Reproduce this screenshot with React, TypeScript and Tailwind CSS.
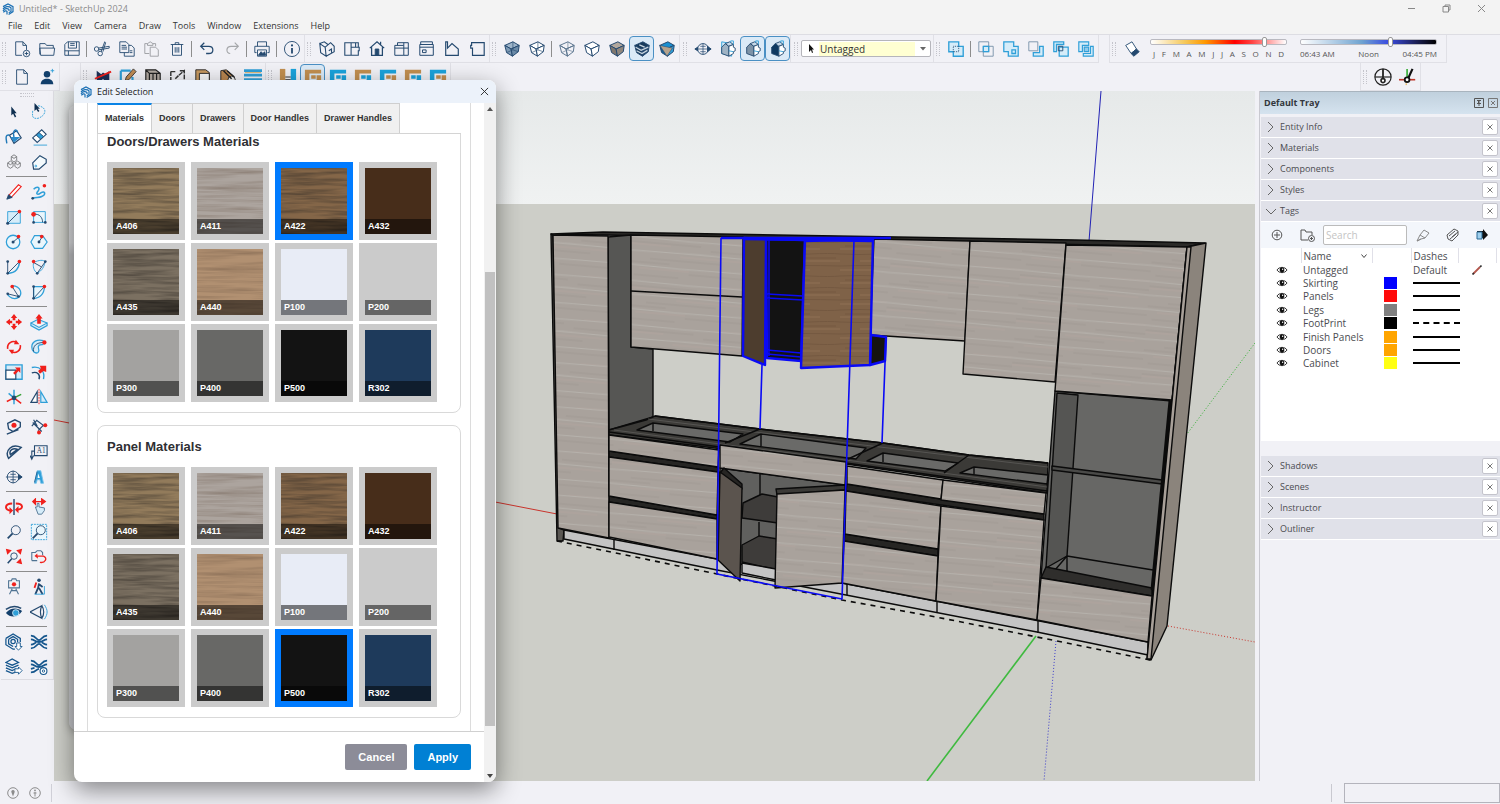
import { useState } from "react"
import type { ReactNode } from "react"
import clsx from "clsx"

const NAVY = "#24496f"
const SKY = "#2f9fd8"
const PALE = "#d5ecf9"
const RED = "#f0201c"

type Item = { label: string; icon: ReactNode; active?: boolean } | "sep"

/* ---------- icon pieces ---------- */

const Logo = () => (
    <svg viewBox="0 0 12 12" className="size-3 shrink-0" fill="none" stroke="#1b70b4" strokeWidth="1.2">
        <path d="M1 3.6 L6 1 L11 3.6 V8.6 L6.6 11.4" />
        <path d="M1 5.8 C3 3.2 7 2.8 9 4.8 V8.4 L6.8 9.8" />
        <path d="M1 7.8 C2.6 5.4 5.6 5 7 6.6 V8" />
        <path d="M1.4 9.4 C2.6 7.8 4.2 7.4 5 8.4 V11.4" />
    </svg>
)

const Cube = ({ top = "none", left = "none", right = "none", line = NAVY, inner = false }) => (
    <g stroke={line} strokeWidth="1.1" strokeLinejoin="round">
        <path d="M2 6 L11 2 L18 6 L9 10 Z" fill={top} />
        <path d="M2 6 L9 10 L10.5 18 L4 14 Z" fill={left} />
        <path d="M18 6 L9 10 L10.5 18 L17 13 Z" fill={right} />
        {inner && <path d="M11 2 L11 11 L4 14 M11 11 L17 13" strokeWidth="0.7" />}
    </g>
)

const House = ({ fill = "#9fb3c4", front = "#fff" }) => (
    <g stroke={NAVY} strokeWidth="1">
        <path d="M3 8 L7 4 L11 7 V18 L3 15 Z" fill={fill} />
        <path d="M7 4 L12 2 L16 5 L11 7 Z" fill="#c7d9e8" />
        <path d="M11 7 L16 5 V8 L18 9 V12 L16 13 V15 L11 18 Z" fill={front} />
        <path d="M11 12 L16 13 M13 3 V1 H16 V5" stroke={SKY} />
    </g>
)

const Dot = ({ x, y, r = 2, c = NAVY }) => <circle cx={x} cy={y} r={r} fill={c} stroke="none" />

const Glass = () => (
    <g>
        <circle cx="12" cy="8" r="5" />
        <path d="M8.5 11.5 L3 17" strokeWidth="2" />
    </g>
)

const Layout = ({ a, b }) => (
    <g stroke="none">
        <path d="M1 2 H19 V6 H6 V18 H1 Z" fill={a} />
        <path d="M8 8 H13 V12 H8 Z M14 8 H19 V18 H14 Z" fill={b} />
    </g>
)

/* ---------- toolbars ---------- */

const fileTools: Item[] = [
    { label: "New", icon: <><path d="M10 17 H3 V2 H11 L15 6 V11 M11 2 V6 H15" /><circle cx="15" cy="15" r="3.6" /><path d="M15 13 V17 M13 15 H17" /></> },
    { label: "Open", icon: <path d="M2 16 V4 H8 L9.5 6 H17 V9 M2 9 H18.5 L17.5 17 H3 Z" /> },
    { label: "Save", icon: <path d="M5 2 H18 V17 H2 V5 Z M6 2 V9 H15 V2 M2 12 H18 M6 12 V17 M8 4 H13 M8 6 H13" /> },
    "sep",
    { label: "Cut", icon: <><circle cx="4" cy="10" r="2.5" /><circle cx="8" cy="15" r="2.5" /><path d="M6 9 L18 7 L18 9 L6 11 M9 13 L13 2 L14 3 L11 13" /></> },
    { label: "Copy", icon: <path d="M2 2 H9 L12 5 V14 H2 Z M12 6 H15 L18 9 V18 H7 V14 M4 6 H9 M4 8 H10 M4 10 H10 M13 12 H16 M13 14 H16" /> },
    { label: "Paste", icon: <g stroke="#9a9ca0"><path d="M7 15 H2 V4 H5 M11 4 H14 V7 M5 6 V4 L8 2 L11 4 V6 Z M8 8 H14 L17 11 V18 H8 Z" /></g> },
    { label: "Delete", icon: <path d="M3 5 H17 M8 5 V3 H12 V5 M5 5 V17 H15 V5 M8 8 V14 M10 8 V14 M12 8 V14" /> },
    "sep",
    { label: "Undo", icon: <path d="M7 3 L3 7 L7 11 M3 7 H12 C18 7 18 15 12 15 H9" strokeWidth="1.4" /> },
    { label: "Redo", icon: <path d="M13 3 L17 7 L13 11 M17 7 H9 C3 7 3 15 8 15" stroke="#a5a7aa" strokeWidth="1.3" /> },
    "sep",
    { label: "Print", icon: <><path d="M5 7 V2 H15 V7 M16 14 H18 V7 H2 V14 H4 M5 11 H15 V18 H5 Z" /><path d="M6 17 L9 13 L11 15 L13 13 L14 17 Z" fill={NAVY} /></> },
    "sep",
    { label: "Model Info", icon: <><circle cx="10" cy="10" r="8.4" /><path d="M10 9 V15" strokeWidth="2" /><Dot x={10} y={6} r={1.2} /></> },
]

const viewTools: Item[] = [
    { label: "Iso", icon: <path d="M2 4 L8 8 L9 18 L3 14 Z M8 8 L14 3 L18 7 V13 L9 18 M2 4 L7 2 L11 5 M12 12 L15 10 V14" strokeWidth="1.2" /> },
    { label: "Top", icon: <path d="M2 3 H17 V8 H18 V12 H17 V17 H2 Z M9 3 V17 M9 8 H17 M14 3 V8" strokeWidth="1.2" /> },
    { label: "Front", icon: <><path d="M2 9 L10 2 L18 9 M4 8 V17 H16 V8 M14 5 V2" strokeWidth="1.4" /><path d="M8 10 H12 V17 H8 Z" fill={NAVY} /></> },
    { label: "Right", icon: <path d="M2 6 H12 V17 H2 Z M5 6 V3 H17 V17 H12 M12 3 V6 M2 9 H17" strokeWidth="1.1" /> },
    { label: "Back", icon: <path d="M2 5 H17 V17 H2 Z M3 5 V2 H16 V5 M2 8 H17 M5 11 H9 V14 H5 Z" strokeWidth="1.1" /> },
    { label: "Left", icon: <path d="M3 2 V17 H17 V10 L10 4 L5 9 V2 Z" strokeWidth="1.3" /> },
    { label: "Bottom", icon: <path d="M4 3 H18 V17 H5 V9 H3 V6 H4 Z" strokeWidth="1.3" /> },
]

const styleTools: Item[] = [
    { label: "X-Ray", icon: <Cube top="#9db4c9" left="#7e9ab4" right="#6b8aa7" inner /> },
    { label: "Back Edges", icon: <Cube top="#fff" left="#fff" right="#fff" inner /> },
    "sep",
    { label: "Wireframe", icon: <Cube inner line="#5d7690" /> },
    { label: "Hidden Line", icon: <Cube top="#fff" left="#fff" right="#fff" /> },
    { label: "Shaded", icon: <Cube top="#b1a79d" left="#7f766d" right="#8f867c" /> },
    { label: "Shaded With Textures", active: true, icon: <><Cube top="#173a5c" left="#173a5c" right="#24496f" /><path d="M3 8 L9 11.5 L17 8 M4 12 L10 15 L16 11.5 M7 5.5 L13 8" stroke="#c9d6e0" strokeWidth="1.4" /></> },
    { label: "Monochrome", icon: <><Cube top="#1a8fd0" left="#1a5f93" right="#2f9fd8" /><path d="M2 6 L16 9 L10 18 Z" fill="#b5a28c" stroke={NAVY} strokeWidth="0.6" /></> },
]

const sectionTools: Item[] = [
    { label: "Section Plane", icon: <><circle cx="10" cy="10" r="6" /><path d="M1 10 H19 M10 4 V16 M7 7 H13 M7 13 H13" strokeWidth="0.8" /><path d="M1 10 L4 8 V12 Z M19 10 L15 7 V13 Z" fill={NAVY} /></> },
    { label: "Display Section Planes", icon: <><path d="M3 2 L14 4 V18 L3 15 Z" fill={PALE} stroke={SKY} /><House /></> },
    { label: "Display Section Cuts", active: true, icon: <House fill="#7d93a7" /> },
    { label: "Display Section Fill", active: true, icon: <House fill="#0f3a61" /> },
]

const solidTools: Item[] = [
    { label: "Outer Shell", icon: <g stroke={SKY}><path d="M2 2 H13 V7 H18 V18 H7 V13 H2 Z" fill={PALE} strokeWidth="1.5" /><path d="M7 7 H13 V13 H7 Z" stroke={NAVY} strokeDasharray="1 1" /></g> },
    "sep",
    { label: "Intersect", icon: <><path d="M2 2 H13 V13 H2 Z M7 7 H18 V18 H7 Z" stroke="#7791a8" /><path d="M7 7 H13 V13 H7 Z" fill={PALE} stroke={SKY} strokeWidth="1.4" /></> },
    { label: "Union", icon: <g stroke={SKY} strokeWidth="1.4"><path d="M2 2 H13 V7 H18 V18 H7 V13 H2 Z" fill={PALE} /><path d="M11 11 H15 V15 H11 Z" /></g> },
    { label: "Subtract", icon: <><path d="M2 2 H12 V12 H2 Z" stroke="#7791a8" /><path d="M14 7 H18 V18 H7 V14 H14 Z" fill={PALE} stroke={SKY} strokeWidth="1.4" /></> },
    { label: "Trim", icon: <><path d="M2 2 H13 V5 H5 V13 H2 Z M8 8 H18 V18 H8 Z" fill={PALE} stroke={SKY} strokeWidth="1.4" /><path d="M7 7 H12 V12 H7 Z" /></> },
    { label: "Split", icon: <g stroke={SKY} strokeWidth="1.3"><path d="M2 2 H13 V6 H6 V13 H2 Z M18 18 H7 V15 H15 V7 H18 Z" fill={PALE} /><path d="M8 8 H13 V13 H8 Z" fill="#8fcbec" /></g> },
]

const cabinetTools: Item[] = [
    { label: "Kitchen", icon: <><path d="M3 16 V3 L8 7 L10 5 L13 7 L17 3 V16 H13 L10 12 L7 16 Z" fill="#1c3057" stroke="none" /><path d="M1 12 L19 4" stroke={RED} strokeWidth="2" /></> },
    { label: "Edit Cabinet", icon: <><path d="M2 3 H13 M2 3 V18 H15 V10" stroke={SKY} strokeWidth="2.4" /><path d="M7 14 L8 10 L16 1 L19 4 L11 13 Z" fill="#c08b52" stroke="#333" /></> },
    { label: "Box", icon: <path d="M2 2 L13 2 L18 6 V18 H6 L2 14 Z M6 6 H18 M6 6 V18 M2 2 L6 6 M10 6 V18 M14 6 V18" fill="#b3aaa2" stroke="#222" strokeWidth="1.3" /> },
    { label: "Swing", icon: <path d="M2 4 V15 M2 4 H7 M11 8 L17 3 V16 M12 3 H17 M7 12 L11 8" stroke="#333" strokeWidth="1.6" strokeDasharray="5 1" /> },
    { label: "Panel", icon: <><path d="M2 2 H13 L17 5 V18 H5 L2 15 Z" fill="#c8995f" stroke="#222" /><path d="M6 6 H17 V18 H6 Z" fill="#f6f6f6" stroke="#222" /></> },
    { label: "Fittings", icon: <><path d="M2 3 L8 2 L16 9 V17 H2 Z" fill="#b98650" stroke="#222" /><circle cx="14" cy="13" r="4" fill="#eee" stroke="#222" /><path d="M5 3 L14 12 M9 3 L17 10" stroke="#222" strokeWidth="1.6" /></> },
    { label: "Report", icon: <><path d="M0 3 H20 M0 8 H20 M0 13 H20" stroke={SKY} strokeWidth="3" /><path d="M1 5 H19" stroke="#d9a44c" strokeWidth="0.8" /></> },
]

const BR = "#c28f4f"
const BL = "#1aa3dc"
const layoutTools: Item[] = [
    { label: "Spacing", icon: <><path d="M1 1 H7 V18 H1 Z" fill={BR} stroke="none" /><path d="M13 1 H19 V18 H13 Z" fill={BL} stroke="none" /><path d="M7 10 H13 M7 13 H13" stroke="#222" /></> },
    { label: "Corner", active: true, icon: <Layout a={BR} b={BR} /> },
    { label: "Layout 2", icon: <Layout a={BL} b={BL} /> },
    { label: "Layout 3", icon: <Layout a={BR} b={BL} /> },
    { label: "Layout 4", icon: <Layout a={BL} b={BR} /> },
    { label: "Layout 5", icon: <Layout a={BR} b={BL} /> },
    { label: "Layout 6", icon: <Layout a={BL} b={BR} /> },
]

const accountTools: Item[] = [
    { label: "New Page", icon: <path d="M4 2 H12 L16 6 V18 H4 Z M12 2 V6 H16" /> },
    { label: "Add Person", icon: <><circle cx="10" cy="7" r="3.6" fill="#123f6b" stroke="none" /><path d="M3 18 C3 10 17 10 17 18 Z" fill="#123f6b" stroke="none" /><path d="M16 1 V5 M14 3 H18" stroke={SKY} /></> },
]

const drawTools: Item[][] = [
    [
        { label: "Select", icon: <path d="M7 4 L7 14 L9 12 L11 16 L12.5 15 L10.5 11.5 H13 Z" fill="#0f2f50" stroke="none" /> },
        { label: "Lasso", icon: <><path d="M9 3 C20 5 18 14 9 17 C1 18 3 13 3 8" stroke={SKY} strokeDasharray="2 1" /><path d="M5 0 L5 9 L7 7 L9 10 L10.5 9 L8.5 6.5 H11 Z" fill="#0f2f50" stroke="none" /></> },
        { label: "Paint Bucket", icon: <><path d="M5 8 L13 3 L18 11 L10 17 Z" fill="#fff" strokeWidth="1.3" /><path d="M6 10 L17 10 L10 16 Z" fill="#2d8ccb" stroke="none" /><path d="M10 10 C8 2 13 0 14 5 M5 8 C0 7 1 12 2 17" stroke="#2179b8" strokeWidth="1.6" /></> },
        { label: "Eraser", icon: <><path d="M3 11 L13 2 L18 7 L8 16 Z" fill="#fff" strokeWidth="1.2" /><path d="M7 8 L10 5 L15 9.5 L12 12.5 Z" fill={SKY} /><path d="M4 19 H19" stroke={SKY} /></> },
        { label: "Components", icon: <path d="M10 2 L13 4 V8 L10 10 L7 8 V4 Z M6 9 L9 11 V15 L6 17 L3 15 V11 Z M14 9 L17 11 V15 L14 17 L11 15 V11 Z M7 4 L10 6 L13 4 M3 11 L6 13 L9 11 M11 11 L14 13 L17 11" stroke="#77787b" /> },
        { label: "Tag", icon: <><path d="M3 11 L11 3 L18 7 V11 L10 18 H4 Z" strokeWidth="1.3" fill="#f4fafd" /><circle cx="6.5" cy="14.5" r="1" stroke={SKY} /></> },
    ],
    [
        { label: "Line", icon: <><path d="M4 14 L15 2 L18 4 L7 16 Z" fill="#fff" stroke={RED} strokeWidth="1.2" /><path d="M2 18 L4 13 L8 16 Z" fill={NAVY} /></> },
        { label: "Freehand", icon: <><path d="M4 7 C8 3 12 5 9 9 C6 12 8 14 12 11 C17 8 18 13 13 15 C10 17 6 15 3 17" stroke={SKY} strokeWidth="1.7" /><Dot x={16} y={3} c={RED} /><Dot x={3} y={17} r={1.5} /></> },
        { label: "Rectangle", icon: <><path d="M3 4 H17 V17 H3 Z" fill={PALE} stroke={SKY} /><path d="M3 17 L16 4" /><Dot x={3} y={17} r={1.7} /><Dot x={16} y={4} c={RED} /></> },
        { label: "Rotated Rectangle", icon: <><path d="M4 4 H17 V16 H4 Z" stroke={SKY} fill="#eaf6fc" /><path d="M4 7 C11 6 14 11 14 16" /><Dot x={4} y={7} r={2.6} c={RED} /><Dot x={4} y={16} r={1.5} /><Dot x={17} y={16} r={1.5} /></> },
        { label: "Circle", icon: <><circle cx="9" cy="10" r="7.5" stroke={SKY} fill="#eaf6fc" strokeWidth="1.4" /><path d="M9 10 L15 5" /><Dot x={9} y={10} r={1.7} /><Dot x={15} y={4} c={RED} /></> },
        { label: "Polygon", icon: <><path d="M5 3 H14 L19 10 L14 17 H5 L1 10 Z" stroke={SKY} fill="#eaf6fc" strokeWidth="1.3" /><path d="M10 10 L13 5" /><Dot x={10} y={10} r={1.6} /><Dot x={13} y={4} c={RED} /></> },
        { label: "Arc", icon: <><path d="M3 17 C12 17 16 11 16 4" stroke={SKY} strokeWidth="1.6" /><path d="M3 4 V17 L16 4" /><Dot x={3} y={4} r={1.5} /><Dot x={3} y={17} r={1.5} /><Dot x={16} y={4} c={RED} /></> },
        { label: "2 Point Arc", icon: <><path d="M4 5 C10 2 15 2 17 4 C15 13 11 15 8 17 C4 14 3 9 4 5" stroke={SKY} /><path d="M4 5 L13 10 M17 4 L8 17" /><Dot x={4} y={4} c={RED} /><Dot x={17} y={4} r={1.5} /><Dot x={8} y={17} r={1.5} /></> },
        { label: "3 Point Arc", icon: <><path d="M8 3 C19 4 19 13 15 16 C10 19 5 16 3 13" stroke={SKY} strokeWidth="1.4" /><path d="M8 4 L15 15 L3 12" /><Dot x={8} y={4} c={RED} /><Dot x={15} y={15} r={1.5} /><Dot x={3} y={12} r={1.5} /></> },
        { label: "Pie", icon: <><path d="M4 4 H16 C16 12 11 17 4 17 Z" stroke={SKY} fill="#eaf6fc" strokeWidth="1.4" /><path d="M4 4 V17 L16 4" /><Dot x={4} y={4} r={1.5} /><Dot x={4} y={17} r={1.5} /><Dot x={16} y={4} c={RED} /></> },
    ],
    [
        { label: "Move", icon: <path d="M10 1 L13.5 5.5 H11.5 V8 H8.5 V5.5 H6.5 Z M10 19 L6.5 14.5 H8.5 V12 H11.5 V14.5 H13.5 Z M1 10 L5.5 6.5 V8.5 H8 V11.5 H5.5 V13.5 Z M19 10 L14.5 13.5 V11.5 H12 V8.5 H14.5 V6.5 Z" fill={RED} stroke="none" /> },
        { label: "Push Pull", icon: <><path d="M1 11 L9 7 L19 11 L10 16 Z M1 11 V14 L10 19 L19 14 V11" fill={PALE} stroke={SKY} strokeWidth="1.3" /><path d="M10 1 L14 6 H12 V12 H8 V6 H6 Z" fill={RED} stroke="none" /></> },
        { label: "Rotate", icon: <g stroke={RED} strokeWidth="1.8"><path d="M3 12 C2 6 8 2 13 5 M17 8 C18 14 12 18 7 15" /><path d="M12 2 L16 7 L10 7 Z M8 18 L4 13 L10 13 Z" fill={RED} stroke="none" /></g> },
        { label: "Follow Me", icon: <><path d="M15 3 C8 1 2 4 2 10 C2 15 6 18 9 16 C12 13 7 11 10 8 L15 7" fill={PALE} stroke={SKY} strokeWidth="1.4" /><path d="M4 15 C3 9 7 5 15 5" /><Dot x={16} y={5} r={2.4} c={RED} /></> },
        { label: "Scale", icon: <><path d="M1 2 H19 V18 H1 Z" fill={PALE} stroke={SKY} strokeWidth="1.5" /><path d="M1 8 H12 V18 H1 Z" fill="#fff" strokeWidth="1.3" /><path d="M9 11 L13 7 L11 5 H17 V11 L15 9 L11 13 Z" fill={RED} stroke="none" /></> },
        { label: "Offset", icon: <><path d="M2 5 C11 3 17 9 15 18" stroke={SKY} strokeWidth="1.5" /><path d="M2 11 C8 9 12 13 10 18" strokeWidth="1.5" /><path d="M9 9 L12 6 L11 3 H18 V10 L15 9 L11 12 Z" fill={RED} stroke="none" /></> },
        { label: "Axes", icon: <><path d="M10 11 V2 M10 11 L4 6 M10 11 L10 18" stroke={SKY} strokeWidth="1.6" /><path d="M10 11 L18 7" stroke="#35a035" strokeWidth="1.6" /><path d="M10 11 L18 17 M10 11 L2 15" stroke={RED} strokeWidth="1.6" /><Dot x={10} y={11} r={2.6} /></> },
        { label: "Flip", icon: <><path d="M8 4 V16 H1 Z" fill="#fff" strokeWidth="1.3" /><path d="M12 4 V16 H19 Z" fill={PALE} stroke={SKY} strokeWidth="1.3" /><path d="M10 1 V19" stroke={RED} strokeDasharray="2 1" /></> },
    ],
    [
        { label: "Tape Measure", icon: <><path d="M3 6 L11 2 L17 5 L17 10 L9 15 L4 12 Z M2 18 L15 13" strokeWidth="1.5" /><Dot x={10} y={8} r={2.8} c={RED} /></> },
        { label: "Dimensions", icon: <><path d="M3 5 L13 15 M8 3 L16 9 M2 9 L8 2 M4 2 L8 9 M9 14 L15 8" strokeWidth="1.3" /><Dot x={17} y={8} r={2.2} c={RED} /><Dot x={10} y={16} r={2.2} c={RED} /></> },
        { label: "Protractor", icon: <path d="M4 17 C-1 8 8 0 18 5 Z M6 13 C4 8 9 5 14 7 Z" strokeWidth="1.6" /> },
        { label: "Text", icon: <><path d="M5 3 H19 V14 H5 Z M5 9 H2 V17 M0 14 L2 18 L4 14" strokeWidth="1.2" /><text x="7.5" y="11.5" fontSize="8" fill={NAVY} stroke="none" fontFamily="Liberation Serif, serif">A1</text></> },
        { label: "Section", icon: <><circle cx="9" cy="10" r="6.5" /><path d="M1 10 H19 M9 3 V17 M6 7 H12 M6 13 H12" strokeWidth="0.9" /><path d="M15 7 L19 10 L15 13 Z" fill={NAVY} /></> },
        { label: "3D Text", icon: <><path d="M5 17 L8 3 H12 L15 17 H12 L11 13 H8 L7 17 Z" fill={SKY} stroke="#79c3ea" /><path d="M9 6 L11 11 H8.5 Z" fill="#fff" stroke="none" /><path d="M8 4 L5 16" stroke="#1b5f93" /></> },
    ],
    [
        { label: "Orbit", icon: <><path d="M10 1 V19" strokeWidth="1.6" /><path d="M8 6 C-1 6 -1 14 7 14 M12 6 C21 6 21 13 13 13" stroke={RED} strokeWidth="2.2" /><path d="M5 10 L9 14 L5 18 Z M15 9 L11 13 L15 17 Z" fill={RED} stroke="none" /></> },
        { label: "Pan", icon: <><path d="M3 4 H16 M3 4 L6 1 V7 Z M17 4 L13 1 V7 Z" stroke={RED} fill={RED} strokeWidth="1.4" /><path d="M6 10 L8 10 V6 H10 V10 L16 11 V14 L13 18 H9 Z" fill={PALE} stroke="#4f7392" /></> },
        { label: "Zoom", icon: <Glass /> },
        { label: "Zoom Window", icon: <><path d="M1.5 1.5 H18.5 V18.5 H1.5 Z" stroke={SKY} strokeDasharray="2 1" fill="#eaf6fc" /><Glass /></> },
        { label: "Zoom Extents", icon: <><circle cx="10" cy="9" r="3.6" /><path d="M7.5 12 L3 17" strokeWidth="1.7" /><path d="M2 2 L6 3 L3 6 Z M18 2 L14 3 L17 6 Z M18 17 L14 16 L17 13 Z" fill={RED} stroke={RED} strokeWidth="1.6" /></> },
        { label: "Previous", icon: <><path d="M2 14 V5 H6 L8 3 H12 L14 5 V8 M2 14 H8" stroke="#4f7392" strokeWidth="1.2" /><path d="M8 9 H15 C20 11 17 17 11 16" stroke={RED} strokeWidth="1.5" /><path d="M8 6 L5 9 L9 12 Z" fill={RED} stroke="none" /></> },
    ],
    [
        { label: "Position Camera", icon: <><path d="M4 3 H7 L8 1 H12 L13 3 H16 V11 H4 Z M8 12 L5 18 M12 12 L15 18 M7 14 H13" stroke="#4f7392" strokeWidth="1.2" /><Dot x={10} y={7} r={2.4} c={RED} /></> },
        { label: "Walk", icon: <><Dot x={10} y={2.5} r={2} /><path d="M10 6 L9 11 L6 18 M10 11 L14 18 M10 7 L14 10" strokeWidth="2" /><path d="M7 5 L5 11" stroke={RED} strokeWidth="2" /><path d="M16 9 V18 H5" stroke={SKY} /></> },
        { label: "Look Around", icon: <><path d="M1 11 C6 5 14 5 19 9 C15 16 6 17 1 11 Z" fill="#123f6b" stroke="none" /><circle cx="12" cy="11" r="3.6" fill={SKY} stroke="#cfe9f7" /><path d="M1 7 C7 3 13 3 18 6" strokeWidth="1.6" /></> },
        { label: "Field of View", icon: <><path d="M0 10 L13 3 C11 8 11 12 13 17 Z M13 3 C16 7 16 13 13 17" strokeWidth="1.3" /><path d="M16 2 C20 8 20 12 16 18" stroke={SKY} /></> },
    ],
    [
        { label: "3D Warehouse", icon: <g stroke="#15568d" strokeWidth="1.4"><path d="M1 6 L9 1 L17 6 V10 M1 6 V13 L9 18 H11 M4 7 L9 4 L14 7 V10 M4 7 V12 L9 15" /><circle cx="9" cy="9.5" r="2.4" /><path d="M13 11 H17 V15 H19 L15 19 L11 15 H13 Z" fill="#fff" strokeWidth="1" /></g> },
        { label: "Extension Warehouse", icon: <g stroke="#15568d" strokeWidth="2"><path d="M1 3 C7 3 7 8 10 8 C13 8 13 3 19 3 M1 17 C7 17 7 12 10 12 C13 12 13 17 19 17 M1 7 C5 7 5 10 10 10 C15 10 15 7 19 7 M1 13 C4 13 5 11 7 10.5 M19 13 C16 13 15 11 13 10.5" /></g> },
        { label: "Layers", icon: <g stroke="#15568d" strokeWidth="1.4"><path d="M1 5 L8 1 L15 5 L8 8 Z M1 8 L8 11 L15 8 M1 11 L8 14 L12 12 M1 14 L8 17 L11 16" /><path d="M11 12 H15 V10 L19 14 L15 18 V16 H11 Z" fill="#fff" strokeWidth="1" /></g> },
        { label: "Extension Manager", icon: <g stroke="#15568d" strokeWidth="2"><path d="M1 3 C7 3 7 8 10 8 C13 8 13 3 19 3 M1 16 C7 16 7 12 10 12 M1 7 C5 7 5 10 10 10 C15 10 15 7 19 7 M1 12 L5 11" /><circle cx="15" cy="14.5" r="3.8" fill="#fff" strokeWidth="1.2" /><circle cx="15" cy="14.5" r="1.3" strokeWidth="1" /></g> },
    ],
]

const Tool = ({ item }: { item: Item }) => {
    if (item === "sep") {
        return <span className="mx-[2px] h-4 w-px shrink-0 bg-[#8d8d8d]" />
    }
    return (
        <button
            type="button"
            aria-label={item.label}
            className={clsx(
                "flex h-[25px] w-[25px] shrink-0 items-center justify-center rounded",
                item.active && "border border-[#4a90c4] bg-[#dbeaf7]"
            )}
        >
            <svg viewBox="0 0 20 20" className="size-[18px] shrink-0" fill="none" stroke={NAVY} strokeWidth="1">
                {item.icon}
            </svg>
        </button>
    )
}

const Bar = ({ items, children, className }: { items?: Item[]; children?: ReactNode; className?: string }) => (
    <div className={clsx("flex shrink-0 items-center border-r border-b border-[#e0e0e6]", className)}>
        <span className="mr-[3px] ml-[2px] h-[14px] w-1 shrink-0 border-x border-dotted border-[#c4c4cb]" />
        {items?.map((it, i) => <Tool key={i} item={it} />)}
        {children}
    </div>
)

/* ---------- kitchen model ---------- */

const woodFaces = [
    "553,235 608,236 609,538 558,528",
    "631,235 743,237 742,356 631,347",
    "874,239 970,241 965,341 870,335",
    "970,241 1066,243 1055,382 963,374",
    "1066,245 1187,247 1172,400 1055,391",
    "609,435 719,450 718,467 609,451",
    "609,457 718,472 717,515 609,496",
    "609,502 717,519 717,559 609,537",
    "720,445 846,462 845,485 720,468",
    "847,466 943,480 941,499 847,484",
    "846,491 941,506 938,549 845,534",
    "844,541 938,556 936,601 842,583",
    "943,480 1046,493 1044,514 941,500",
    "941,506 1044,520 1037,620 936,601",
    "1041,578 1152,596 1148,642 1037,620",
]

const Model = () => (
    <svg
        viewBox="54 91 1201 690"
        preserveAspectRatio="xMaxYMin slice"
        className="block h-full w-full"
        fill="none"
        role="img"
        aria-label="Kitchen model"
    >
        <defs>
            <linearGradient id="sky" x1="0" y1="0" x2="0" y2="1">
                <stop offset="0" stopColor="#e6e9e9" />
                <stop offset="1" stopColor="#f0f2f2" />
            </linearGradient>
            <pattern id="ash" width="130" height="44" patternUnits="userSpaceOnUse" patternTransform="rotate(5)">
                <path d="M0 0 H130 V44 H0 Z" fill="#a9a29c" />
                <path d="M0 9 H70 M80 13 H130 M20 25 H90 M0 29 H40 M60 38 H130 M5 42 H50" stroke="#a29a94" />
                <path d="M0 11 H40 M50 21 H120 M10 35 H60 M90 4 H130" stroke="#ada39d" strokeWidth="2" />
                <path d="M0 4 L60 5 L130 4 M0 18 L70 17 L130 18 M0 32 L50 33 L130 32" stroke="#b6b2ac" strokeWidth="1.2" />
            </pattern>
            <pattern id="oak" width="70" height="34" patternUnits="userSpaceOnUse">
                <path d="M0 0 H70 V34 H0 Z" fill="#7f6248" />
                <path d="M0 4 Q20 3 40 4 T70 4 M5 8 H40 M0 16 Q20 17 40 16 T70 16 M30 20 H66 M0 28 Q30 27 70 28" stroke="#745840" />
                <path d="M0 11 H50 M20 23 H70 M0 32 H40" stroke="#87694e" strokeWidth="1.8" />
            </pattern>
        </defs>
        <rect x="54" y="91" width="1201" height="114" fill="url(#sky)" />
        <rect x="54" y="204" width="1201" height="577" fill="#cdcec8" />

        {/* axes */}
        <path d="M1101 91 L1089 241" stroke="#2222b4" />
        <path d="M54 420 L110 431 M490 501 L557 514" stroke="#c8342c" />
        <path d="M1168 626 L1255 642" stroke="#c8342c" strokeDasharray="1 2" />
        <path d="M1255 343 L1187 434" stroke="#2fae2f" strokeDasharray="1 2" />
        <path d="M1036 636 L927 781" stroke="#3fba3f" strokeWidth="1.6" />
        <path d="M1056 641 L1044 781" stroke="#3c3ccb" strokeDasharray="1 2" />

        <g stroke="#0b0b0b" strokeWidth="1.4" strokeLinejoin="round">
            {/* carcass sides and tops */}
            <path d="M551 234 L603 232 L1075 240 L1205 243 L1187 247 L873 240 Z" fill="#2b2a28" />
            <path d="M551 234 L553 235 L559 528 L564 530 L563 541 L557 541 Z" fill="#5a5753" />
            <path d="M608 237 L631 235 V347 L653 349 V417 L609 430 Z" fill="#565654" />
            <path d="M564 530 L717 559 L842 583 L1148 642 V655 L1037 632 L846 595 L717 570 L564 539 Z" fill="#c4c4c4" />
            <path d="M614 539 V550 M937 601 V613 M1038 621 V633 M847 584 V595" />

            {/* worktop frames */}
            <path d="M609 430 L646 420 L655 416 L760 429 L883 443 L969 455 L1048 463 L1047 493 L846 464 L609 435 Z" fill="#3b3a37" />
            <path d="M653 423 L743 434 L730 442 L637 430 Z M761 434 L866 448 L856 459 L740 444 Z M883 453 L958 463 L945 471 L867 461 Z M974 467 L1048 475 L1047 484 L960 473 Z" fill="#6a6a68" />
            <path d="M653 423 V431 M761 434 V446 M883 453 V462 M974 467 V474" />
            <path d="M648 419 L755 432 L880 447 L1048 467 M614 430 L720 444 L846 460 L1047 487" stroke="#5d5c59" strokeWidth="0.8" />
            <path d="M655 416 L760 429 L883 443 L969 455 L1048 463 M609 432 L720 447 L846 463 L1047 491 M760 429 L725 443 M883 443 L848 459 M969 455 L944 473" />
            <path d="M609 451 L718 467 V472 L609 457 Z M609 496 L717 515 V519 L609 502 Z M847 484 L941 499 L1044 514 V520 L846 491 Z M845 534 L938 549 V556 L844 541 Z" fill="#262523" />

            {/* sink unit interior */}
            <path d="M720 468 L846 485 L842 583 L718 560 Z" fill="#60605e" />
            <path d="M743 503 L762 494 L778 497 V523 L742 518 Z" fill="#3e3c3a" />
            <path d="M742 545 L759 536 L778 539 V570 L742 562 Z" fill="#3e3c3a" />
            <path d="M742 563 L776 569 V580 L742 573 Z" fill="#c4c4c4" />
            <path d="M760 474 V495 M759 522 V536" />

            {/* oven housing */}
            <path d="M1055 391 L1172 401 L1152 596 L1041 578 Z" fill="#676765" />
            <path d="M1057 393 L1078 395 L1067 556 L1046 568 Z" fill="#555553" />
            <path d="M1052 466 L1162 480 V484 L1052 470 Z" fill="#4a4a48" />
            <path d="M1067 556 L1153 570 M1067 556 L1055 570 M1067 556 V571" />
            <path d="M1046 567 L1152 588 V596 L1041 578 Z" fill="#2f2e2c" />

            {woodFaces.map(p => <polygon key={p} points={p} fill="url(#ash)" />)}
            <path d="M631 291 L742 297" />

            {/* end panel */}
            <path d="M1187 247 L1206 243 L1167 626 L1151 660 L1147 659 Z" fill="#8b847c" />
            <path d="M1187 247 L1191 247 L1151 659 L1147 659 Z" fill="#a8a099" />
            <path d="M1170 401 L1152 590" strokeWidth="3" />

            {/* open doors of the sink unit */}
            <path d="M724 468 L742 484 V489 L720 473 Z" fill="#262523" />
            <path d="M720 472 L742 488 L740 581 L718 560 Z" fill="#5b544e" />
            <path d="M776 489 L845 485 V490 L777 495 Z" fill="#3b3a37" />
            <path d="M777 494 L845 490 L842 583 L775 588 Z" fill="url(#ash)" />
            <path d="M557 541 L611 552 L717 574 L842 600 L936 617 L1037 637 L1150 660" strokeDasharray="5 5" strokeWidth="1.6" />
        </g>

        {/* selected wall unit */}
        <g stroke="#0a0af5" strokeWidth="2.4" strokeLinejoin="round">
            <path d="M766 239 L805 240 L801 361 L767 358 Z" fill="#131313" />
            <path d="M871 335 L886 337 L885 361 L870 365 Z" fill="#151310" />
            <path d="M744 238 L766 239 L765 365 L743 356 Z" fill="#4d3d2e" />
            <path d="M805 241 L873 239 L870 365 L801 368 Z" fill="url(#oak)" />
            <path d="M767 294 L803 296 M767 298 L803 300 M767 350 L801 353 M767 354 L801 357 M769 240 V356" strokeWidth="1.5" />
            <path d="M721 238 L891 238 M744 239 L872 241" strokeWidth="2.6" />
            <path d="M721 238 L717 574 L842 599 L854 240 M762 365 L760 429 M886 337 L882 443" strokeWidth="1.6" />
        </g>
    </svg>
)

/* ---------- dialog ---------- */

const materials = [
    { code: "A406", color: "#927b5b", grain: "url(#grain-strong)" },
    { code: "A411", color: "#aca49e", grain: "url(#grain-soft)" },
    { code: "A422", color: "#846648", grain: "url(#grain-strong)" },
    { code: "A432", color: "#472d1a" },
    { code: "A435", color: "#7b7061", grain: "url(#grain-strong)" },
    { code: "A440", color: "#b19071", grain: "url(#grain-soft)" },
    { code: "P100", color: "#e8ecf6" },
    { code: "P200", color: "#cbcbcb" },
    { code: "P300", color: "#a3a2a0" },
    { code: "P400", color: "#686866" },
    { code: "P500", color: "#131313" },
    { code: "R302", color: "#1e3a5b" },
]

const GrainFilters = () => (
    <svg className="absolute size-0" aria-hidden="true">
        <filter id="grain-strong" x="0" y="0" width="1" height="1" colorInterpolationFilters="sRGB">
            <feTurbulence type="fractalNoise" baseFrequency="0.02 0.28" numOctaves="3" seed="7" />
            <feColorMatrix values="0 0 0 0 0.18  0 0 0 0 0.16  0 0 0 0 0.14  1.1 0 0 0 -0.4" />
            <feMerge>
                <feMergeNode in="SourceGraphic" />
                <feMergeNode />
            </feMerge>
        </filter>
        <filter id="grain-soft" x="0" y="0" width="1" height="1" colorInterpolationFilters="sRGB">
            <feTurbulence type="fractalNoise" baseFrequency="0.014 0.32" numOctaves="3" seed="3" />
            <feColorMatrix values="0 0 0 0 0.36  0 0 0 0 0.28  0 0 0 0 0.22  0.7 0 0 0 -0.28" />
            <feMerge>
                <feMergeNode in="SourceGraphic" />
                <feMergeNode />
            </feMerge>
        </filter>
    </svg>
)

const Swatches = ({ title, value, onChange }: { title: string; value: string; onChange: (code: string) => void }) => (
    <section className="rounded-lg border border-[#d9d9d9] px-[9px] pt-[9px] pb-[10px]">
        <h2 className="mb-3 h-5 pt-[5px] text-[13px] leading-[13px] font-bold text-[#2f2f33]">{title}</h2>
        <div className="flex flex-wrap gap-x-[6px] gap-y-[3px]">
            {materials.map(m => (
                <button
                    key={m.code}
                    type="button"
                    aria-pressed={value === m.code}
                    onClick={() => onChange(m.code)}
                    className={clsx("grid size-[78px] p-[6px]", value === m.code ? "bg-[#007bff]" : "bg-[#cbcbcb]")}
                >
                    <svg viewBox="0 0 66 66" className="col-start-1 row-start-1 size-[66px]">
                        <rect width="66" height="66" fill={m.color} filter={m.grain} />
                    </svg>
                    <span className="col-start-1 row-start-1 h-[15px] self-end bg-black/50 px-[3px] text-left text-[9px] leading-[15px] font-bold text-white">
                        {m.code}
                    </span>
                </button>
            ))}
        </div>
    </section>
)

const tabs = ["Materials", "Doors", "Drawers", "Door Handles", "Drawer Handles"]

const EditSelection = () => {
    const [tab, setTab] = useState("Materials")
    const [door, setDoor] = useState("A422")
    const [panel, setPanel] = useState("P500")
    return (
        <div
            role="dialog"
            aria-label="Edit Selection"
            className="absolute top-20 left-[74px] flex h-[702px] w-[422px] flex-col overflow-hidden rounded-lg bg-white shadow-[0_8px_24px_rgba(0,0,0,0.45)]"
        >
            <div className="flex h-[23px] shrink-0 items-center bg-[#ecf2fa] pr-[6px] pl-[6px]">
                <Logo />
                <span className="ml-[5px] flex-1 text-[9px] text-[#222]">Edit Selection</span>
                <button type="button" aria-label="Close" className="flex size-3 items-center justify-center">
                    <svg viewBox="0 0 10 10" className="size-[9px]" stroke="#222" strokeWidth="1"><path d="M1 1 L9 9 M9 1 L1 9" /></svg>
                </button>
            </div>
            <div className="flex min-h-0 flex-1 font-['Liberation_Sans',Arial,sans-serif]">
                <div className="flex min-w-0 flex-1 flex-col">
                    <div className="mx-[13px] flex min-h-0 flex-1 flex-col border-x border-[#dcdcdc] px-[9px]">
                        <div role="tablist" className="flex h-[31px] shrink-0 border-b border-[#d4d4d4]">
                            {tabs.map(t => (
                                <button
                                    key={t}
                                    type="button"
                                    role="tab"
                                    aria-selected={tab === t}
                                    onClick={() => setTab(t)}
                                    className={clsx(
                                        "border-r border-[#cfcfcf] px-[7px] text-[9px] font-bold whitespace-nowrap text-[#333]",
                                        tab === t ? "border-t-2 border-l border-t-[#0a84e6] bg-white" : "border-t bg-[#f0f0f0]"
                                    )}
                                >
                                    {t}
                                </button>
                            ))}
                        </div>
                        <div className="flex min-h-0 flex-1 flex-col overflow-hidden">
                            <div className="-mt-[14px] flex flex-col gap-3">
                                <Swatches title="Doors/Drawers Materials" value={door} onChange={setDoor} />
                                <Swatches title="Panel Materials" value={panel} onChange={setPanel} />
                            </div>
                        </div>
                    </div>
                    <div className="flex h-[51px] shrink-0 items-center justify-end gap-[7px] border-t border-[#d0d0d0] pr-[13px]">
                        <button type="button" className="h-[26px] rounded-xs bg-[#8c8c98] px-[13px] text-[11px] font-bold text-white">Cancel</button>
                        <button type="button" className="h-[26px] rounded-xs bg-[#0080d4] px-[13px] text-[11px] font-bold text-white">Apply</button>
                    </div>
                </div>
                <div className="flex w-3 shrink-0 flex-col items-center bg-[#f1f1f1] py-1">
                    <svg viewBox="0 0 6 4" className="h-1 w-[6px]"><path d="M0 4 L3 0 L6 4 Z" fill="#555" /></svg>
                    <div className="mt-[161px] mb-[48px] w-[10px] flex-1 bg-[#c1c1c1]" />
                    <svg viewBox="0 0 6 4" className="h-1 w-[6px]"><path d="M0 0 L3 4 L6 0 Z" fill="#444" /></svg>
                </div>
            </div>
        </div>
    )
}

/* ---------- tray ---------- */

const tags = [
    { name: "Untagged", dash: "Default" },
    { name: "Skirting", color: "bg-[#0000ff]" },
    { name: "Panels", color: "bg-[#ff0a0a]" },
    { name: "Legs", color: "bg-[#808080]" },
    { name: "FootPrint", color: "bg-black", dash: "dashed" },
    { name: "Finish Panels", color: "bg-[#ffa500]" },
    { name: "Doors", color: "bg-[#ffa500]" },
    { name: "Cabinet", color: "bg-[#ffff14]" },
]

const TrayRow = ({ title, open }: { title: string; open?: boolean }) => (
    <div className="flex h-[21px] shrink-0 items-center border-b border-white bg-[#e0e1e9] pr-[2px] pl-[5px]">
        <button type="button" aria-expanded={!!open} className="flex flex-1 items-center gap-1 text-left">
            <svg viewBox="0 0 10 10" className="size-[10px]" fill="none" stroke="#666">
                <path d={open ? "M0 3 L5 8 L10 3" : "M2 0 L7 5 L2 10"} />
            </svg>
            <span>{title}</span>
        </button>
        <button type="button" aria-label={"Close " + title} className="flex size-4 items-center justify-center rounded-xs border border-[#c4c4cc] bg-white">
            <svg viewBox="0 0 6 6" className="size-[6px]" stroke="#777"><path d="M0.5 0.5 L5.5 5.5 M5.5 0.5 L0.5 5.5" /></svg>
        </button>
    </div>
)

const TagTool = ({ label, children }: { label: string; children: ReactNode }) => (
    <button type="button" aria-label={label} className="flex size-[18px] shrink-0 items-center justify-center">
        <svg viewBox="0 0 16 16" className="size-4" fill="none" stroke="#555">{children}</svg>
    </button>
)

const Tray = () => (
    <aside className="flex w-[241px] shrink-0 flex-col border-l border-[#c9c9d0] text-[9px] text-[#4b4b50]">
        <div className="flex h-[23px] shrink-0 items-center gap-1 border-t border-[#a9b4be] bg-gradient-to-b from-[#c0d0dd] to-[#d5e3ef] pr-[2px] pl-1">
            <span className="flex-1 font-bold text-[#33373c]">Default Tray</span>
            <svg viewBox="0 0 10 10" className="size-[10px]" fill="none" stroke="#555"><path d="M0.5 0.5 H9.5 V9.5 H0.5 Z M3 2.5 H7 M3 5.5 H7 M5 2 V8 M4.5 2 V5" /></svg>
            <svg viewBox="0 0 10 10" className="size-[10px]" fill="none" stroke="#777"><path d="M0.5 0.5 H9.5 V9.5 H0.5 Z M3 3 L7 7 M7 3 L3 7" /></svg>
        </div>
        <div className="mt-[3px] ml-px flex flex-col">
            <TrayRow title="Entity Info" />
            <TrayRow title="Materials" />
            <TrayRow title="Components" />
            <TrayRow title="Styles" />
            <TrayRow title="Tags" open />
        </div>
        <div className="ml-px flex h-[26px] shrink-0 items-center bg-[#f3f6fb] pr-[9px] pl-[7px]">
            <TagTool label="Add Tag"><circle cx="8" cy="8" r="4.8" /><path d="M8 5 V11 M5 8 H11" /></TagTool>
            <span className="w-3" />
            <TagTool label="Add Folder"><path d="M9 13 H2 V3 H6 L7 5 H13 V8" /><circle cx="12.5" cy="11.5" r="3" /><path d="M12.5 10 V13 M11 11.5 H14" /></TagTool>
            <input aria-label="Search tags" placeholder="Search" className="mx-[7px] h-5 w-[84px] rounded-xs border border-[#bbb] bg-white px-[2px] text-[10px] placeholder:text-[#c4c4c4]" />
            <TagTool label="Tag Brush"><path d="M2 14 L5 8 L9 3 L14 6 L10 11 L6 12 Z M2 14 L6 12 M5 8 L10 11" stroke="#888" /></TagTool>
            <span className="flex-1" />
            <TagTool label="Color by Tag"><path d="M2 8 L9 2 L13 4 V8 L7 14 L3 12 Z M4 9 L10 4 M5 12 L11 7 M7 10 L13 5" /></TagTool>
            <span className="flex-1" />
            <TagTool label="Details"><path d="M3 4 H9 V2 L14 8 L9 13 V11 H3 Z" fill="#111" stroke="none" /><path d="M3 5 H8 V12 H3 Z" fill="#9fd0ee" stroke="#2b6a96" /></TagTool>
        </div>
        <div className="ml-px flex h-[193px] shrink-0 flex-col items-start bg-white pr-[3px] pl-px">
            <table className="h-[122px] w-full table-fixed border-collapse text-left leading-3">
                <thead>
                    <tr className="h-[15px] [&>th]:border-r [&>th]:border-[#e0e0e8] [&>th]:p-0 [&>th]:pl-[2px] [&>th]:font-normal">
                        <th className="w-[39px]" aria-label="Visible" />
                        <th className="w-[71px] text-[10px]">
                            <span className="flex items-center justify-between pr-1">
                                Name
                                <svg viewBox="0 0 8 8" className="size-2" fill="none" stroke="#444"><path d="M1.5 2.5 L4 5.5 L6.5 2.5" /></svg>
                            </span>
                        </th>
                        <th className="w-[39px]" aria-label="Color" />
                        <th className="w-[47px] text-[10px]">Dashes</th>
                        <th aria-label="Active" />
                    </tr>
                </thead>
                <tbody className="text-[10px]">
                    {tags.map(t => (
                        <tr key={t.name} className="[&>td]:p-0">
                            <td>
                                <svg viewBox="0 0 12 10" className="mx-auto h-[10px] w-3" fill="none" stroke="#333">
                                    <path d="M1 5 C3 1.5 9 1.5 11 5 C9 8.5 3 8.5 1 5 Z" />
                                    <circle cx="6" cy="5" r="2.4" fill="#111" stroke="none" />
                                    <circle cx="6.6" cy="4.2" r="0.7" fill="#fff" stroke="none" />
                                </svg>
                            </td>
                            <td><span className="block pl-[2px] whitespace-nowrap">{t.name}</span></td>
                            <td>{t.color && <span className={clsx("ml-3 block h-3 w-[13px]", t.color)} />}</td>
                            <td>
                                {t.dash === "Default"
                                    ? <span className="block pl-[2px]">Default</span>
                                    : <span className={clsx("ml-[2px] block w-[47px] border-t-2 border-black", t.dash === "dashed" && "border-dashed")} />}
                            </td>
                            <td>
                                {t.dash === "Default" && (
                                    <svg viewBox="0 0 10 10" className="mx-auto size-[10px]" fill="none"><path d="M1 9 L8 2" stroke="#b3564c" strokeWidth="1.8" /><path d="M8 2 L9.5 0.5 M0.5 9.5 L2 8" stroke="#333" strokeWidth="1.6" /></svg>
                                )}
                            </td>
                        </tr>
                    ))}
                </tbody>
            </table>
        </div>
        <div className="mt-[15px] ml-px flex flex-col">
            <TrayRow title="Shadows" />
            <TrayRow title="Scenes" />
            <TrayRow title="Instructor" />
            <TrayRow title="Outliner" />
        </div>
    </aside>
)

/* ---------- page ---------- */

const slider = "block h-[6px] w-full appearance-none rounded-xs border border-[#b9b9c0] [&::-webkit-slider-thumb]:h-[10px] [&::-webkit-slider-thumb]:w-[5px] [&::-webkit-slider-thumb]:appearance-none [&::-webkit-slider-thumb]:rounded-xs [&::-webkit-slider-thumb]:border [&::-webkit-slider-thumb]:border-[#999] [&::-webkit-slider-thumb]:bg-white"

const menus = ["File", "Edit", "View", "Camera", "Draw", "Tools", "Window", "Extensions", "Help"]
const months = ["J", "F", "M", "A", "M", "J", "J", "A", "S", "O", "N", "D"]

export default function App() {
    return (
        <div className="relative flex h-screen min-h-[790px] flex-col overflow-hidden bg-[#f1f1f6] font-['Open_Sans','Noto_Sans',sans-serif] text-[#333]">
            <GrainFilters />
            <header className="flex h-[17px] shrink-0 items-center bg-[#f3f3f3] px-[2px]">
                <Logo />
                <h1 className="ml-[5px] flex-1 text-[9px] text-[#8b8b8b]">Untitled* - SketchUp 2024</h1>
                <div className="flex gap-[26px] pr-3">
                    <button type="button" aria-label="Minimize"><svg viewBox="0 0 9 9" className="size-[9px]" stroke="#888"><path d="M1 4.5 H8" /></svg></button>
                    <button type="button" aria-label="Restore"><svg viewBox="0 0 9 9" className="size-[9px]" fill="none" stroke="#888"><path d="M1 2.5 H6.5 V8 H1 Z M3 2.5 V1 H8 V6 H6.5" /></svg></button>
                    <button type="button" aria-label="Close window"><svg viewBox="0 0 9 9" className="size-[9px]" stroke="#888"><path d="M1 1 L8 8 M8 1 L1 8" /></svg></button>
                </div>
            </header>
            <nav className="flex h-[18px] shrink-0 items-center border-b border-[#dddde3] bg-[#f3f3f3] px-[2px]">
                {menus.map(m => <button key={m} type="button" className="px-[6px] text-[9px]">{m}</button>)}
            </nav>

            <div className="flex h-7 shrink-0 items-stretch">
                <Bar items={fileTools} />
                <Bar items={viewTools} />
                <Bar items={styleTools} />
                <Bar items={sectionTools} className="pl-px" />
                <Bar className="pr-[2px] pl-px">
                    <div className="flex h-[17px] w-[130px] items-center rounded-xs border border-[#b5b5bb] bg-white pl-[5px]">
                        <svg viewBox="0 0 8 10" className="h-[10px] w-2"><path d="M2 0 V8 L4 6 L5 9 L6 8.5 L5 5.5 H7 Z" fill="#111" /></svg>
                        <select aria-label="Active tag" className="ml-1 h-[14px] w-24 appearance-none bg-[#ffffd2] px-px text-[10px] leading-[14px]">
                            <option>Untagged</option>
                        </select>
                        <svg viewBox="0 0 6 4" className="mx-auto h-1 w-[6px]"><path d="M0 0 L3 3.5 L6 0 Z" fill="#666" /></svg>
                    </div>
                </Bar>
                <Bar items={solidTools} />
                <Bar className="ml-[10px] border-l pr-[9px]">
                    <Tool item={{ label: "Shadows", icon: <><path d="M3 6 L10 2 L15 10 L9 15 Z" fill="#fff" /><path d="M9 15 L15 10 L18 13 L12 18 Z" fill={NAVY} /></> }} />
                    <div className="ml-[6px] flex w-[137px] flex-col gap-1 text-[8px] leading-[10px] text-[#555]">
                        <input type="range" aria-label="Date" min="0" max="100" defaultValue="85" className={clsx(slider, "bg-linear-[90deg,#fff,#f5c85a_25%,#f90_40%,#f00_62%,#f44_75%,#fff]")} />
                        <div className="flex justify-between px-[3px]">{months.map((m, i) => <span key={i}>{m}</span>)}</div>
                    </div>
                    <div className="ml-[13px] flex w-[137px] flex-col gap-1 text-[8px] leading-[10px] text-[#555]">
                        <input type="range" aria-label="Time" min="0" max="100" defaultValue="67" className={clsx(slider, "bg-linear-[90deg,#fff,#6fa3d0_45%,#3a4be0_65%,#1c2058_85%,#000]")} />
                        <div className="flex justify-between"><span>06:43 AM</span><span>Noon</span><span>04:45 PM</span></div>
                    </div>
                </Bar>
            </div>
            <div className="flex h-7 shrink-0 items-stretch">
                <Bar items={accountTools} />
                <Bar items={cabinetTools} className="ml-[20px] border-l" />
                <Bar items={layoutTools} />
                <span className="flex-1" />
                <Bar className="mr-[79px] border-l">
                    <Tool item={{ label: "North", icon: <g stroke="#222" strokeWidth="1.3"><circle cx="10" cy="10" r="9" /><path d="M1 10 H19" /><path d="M10 1 V12" strokeWidth="2" /><circle cx="10" cy="14" r="2.2" fill="#fff" strokeWidth="1.8" /></g> }} />
                    <Tool item={{ label: "Set North", icon: <><path d="M9 1 V10" stroke="#47b347" strokeWidth="2" /><path d="M0 13 H18" stroke="#c0392b" strokeWidth="1.8" /><path d="M15 1 L10 12" stroke="#111" strokeWidth="2.4" /><circle cx="9" cy="13" r="2.6" fill="#fff" stroke="#111" strokeWidth="2" /><path d="M8 17 V19" stroke="#e0a020" /></> }} />
                </Bar>
            </div>

            <main className="flex min-h-0 flex-1">
                <div className="flex w-[54px] shrink-0 flex-col items-center">
                    <div className="flex w-[53px] flex-col items-center border-r border-b border-[#dcdce2] pt-[2px]">
                        <span className="mb-[2px] h-1 w-[14px] border-y border-dotted border-[#c4c4cb]" />
                        {drawTools.map((group, g) => (
                            <div key={g} className="flex flex-col items-center">
                                {g > 0 && <span className="my-[2px] h-px w-[41px] bg-[#8d8d8d]" />}
                                <div className="grid grid-cols-2">
                                    {group.map((it, i) => <Tool key={i} item={it} />)}
                                </div>
                            </div>
                        ))}
                    </div>
                </div>
                <div className="min-w-0 flex-1"><Model /></div>
                <span className="w-1 shrink-0" />
                <Tray />
            </main>

            <footer className="flex h-[23px] shrink-0 items-center pl-[7px]">
                <svg viewBox="0 0 12 12" className="size-3" fill="none" stroke="#8c8c8c"><circle cx="6" cy="6" r="5.3" /><path d="M6 9.5 L4.5 5.5 A1.7 1.7 0 1 1 7.5 5.5 Z" fill="#8c8c8c" stroke="none" /></svg>
                <svg viewBox="0 0 12 12" className="ml-[10px] size-3" fill="none" stroke="#8c8c8c"><circle cx="6" cy="6" r="5.3" /><path d="M6 5 V9.5 M4.5 6 H7.5" /><circle cx="6" cy="3.4" r="0.9" fill="#8c8c8c" stroke="none" /></svg>
                <span className="ml-[10px] h-[18px] w-px bg-[#d0d0d8]" />
                <span className="flex-1" />
                <span className="h-[18px] w-px bg-[#c9c9d0]" />
                <span className="ml-3 h-5 w-[156px] border border-[#b4b4bc]" />
            </footer>

            {/* second extension window, mostly hidden under the dialog */}
            <div className="absolute top-[105px] left-[69px] h-[625px] w-[400px] rounded-lg bg-linear-[180deg,#dedfe1,#d4d5d8_22%,#b9babd_24%,#c4c5c9] shadow-[0_2px_8px_rgba(0,0,0,0.3)]" />
            <EditSelection />
        </div>
    )
}
